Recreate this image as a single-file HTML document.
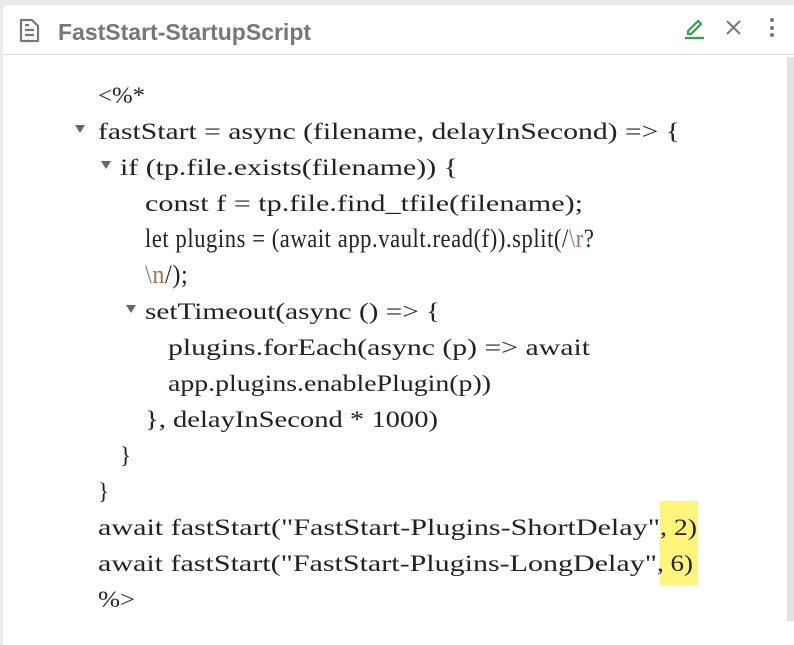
<!DOCTYPE html>
<html><head><style>
html,body{margin:0;padding:0;width:794px;height:621px;overflow:hidden;background:#ebebeb;}
.panel{position:absolute;left:3px;top:5px;width:791px;height:640px;background:#fff;border-radius:6px 0 0 0;}
.hdr{position:absolute;left:0;top:0;width:791px;height:49px;border-bottom:1px solid #ddd;}
.title{position:absolute;left:55px;top:14px;font:bold 23px "Liberation Sans",sans-serif;color:#777;}
.sb{position:absolute;left:787px;top:57px;width:7px;height:564px;background:#e2e2e2;}
</style></head><body>
<div class="panel"><div class="hdr"></div>
<div class="title">FastStart-StartupScript</div>
</div>
<svg style="position:absolute;left:0;top:0" width="794" height="621" viewBox="0 0 794 621">
<g fill="none" stroke="#777" stroke-width="2.2" stroke-linejoin="round">
<path d="M21 20h11l6 6v15h-17z"/><path d="M25 30h9M25 35h9M25 25h4"/>
</g>
<g stroke="#2ea44f" stroke-width="2.2" fill="none"><path d="M688 31l10-10 3 3-10 10h-3z"/><path d="M685 38h19"/></g>
<g stroke="#777" stroke-width="2"><path d="M727 21l13 13M740 21l-13 13"/></g>
<g fill="#777"><circle cx="772" cy="20" r="2"/><circle cx="772" cy="28" r="2"/><circle cx="772" cy="35" r="2"/></g>
<rect x="660" y="501" width="38" height="84" fill="#fff57a"/>
<g fill="#666"><path d="M75 125h10l-5 8z"/><path d="M101 161h10l-5 8z"/><path d="M126 305h10l-5 8z"/></g>
<g font-family="Liberation Serif, serif" font-size="23" fill="#222">
<text x="98" y="103" textLength="47" lengthAdjust="spacingAndGlyphs">&lt;%*</text>
<text x="98" y="139" textLength="582" lengthAdjust="spacingAndGlyphs">fastStart = async (filename, delayInSecond) =&gt; {</text>
<text x="120" y="175" textLength="338" lengthAdjust="spacingAndGlyphs">if (tp.file.exists(filename)) {</text>
<text x="145" y="211" textLength="438" lengthAdjust="spacingAndGlyphs">const f = tp.file.find_tfile(filename);</text>
<text transform="translate(145,247) scale(0.98,1.15)" x="0" y="0" letter-spacing="0.6">let plugins = (await app.vault.read(f)).split(/<tspan fill="#a07060">\r</tspan>?</text>
<text transform="translate(145,283) scale(1.05,1.15)" x="0" y="0" letter-spacing="0.6"><tspan fill="#a07060">\n</tspan>/);</text>
<text x="145" y="319" textLength="295" lengthAdjust="spacingAndGlyphs">setTimeout(async () =&gt; {</text>
<text x="168" y="355" textLength="422" lengthAdjust="spacingAndGlyphs">plugins.forEach(async (p) =&gt; await</text>
<text x="168" y="391" textLength="323" lengthAdjust="spacingAndGlyphs">app.plugins.enablePlugin(p))</text>
<text x="145" y="427" textLength="293" lengthAdjust="spacingAndGlyphs">}, delayInSecond * 1000)</text>
<text x="120" y="463">}</text>
<text x="98" y="499">}</text>
<text x="98" y="535" textLength="562" lengthAdjust="spacingAndGlyphs">await fastStart("FastStart-Plugins-ShortDelay"</text>
<text x="660" y="535" textLength="37" lengthAdjust="spacingAndGlyphs">, 2)</text>
<text x="98" y="571" textLength="559" lengthAdjust="spacingAndGlyphs">await fastStart("FastStart-Plugins-LongDelay"</text>
<text x="657" y="571" textLength="36" lengthAdjust="spacingAndGlyphs">, 6)</text>
<text x="98" y="607" textLength="37" lengthAdjust="spacingAndGlyphs">%&gt;</text>
</g>
</svg>
<div class="sb"></div>
</body></html>
